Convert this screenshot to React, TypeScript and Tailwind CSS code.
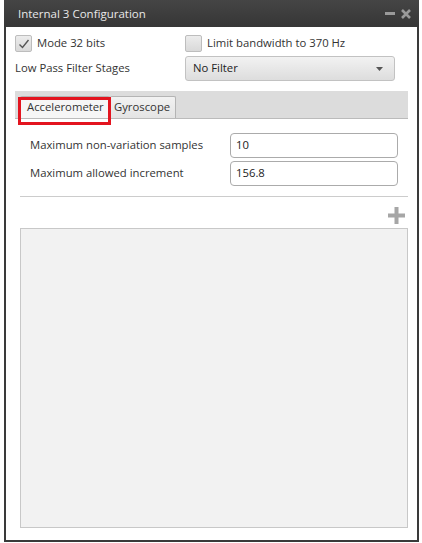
import React from 'react';

const font = { fontFamily: '"Open Sans", "Noto Sans", sans-serif' };

const Check: React.FC<{ checked?: boolean; label: string }> = ({ checked, label }) => (
  <label className="flex items-center gap-[5px] text-[11.3px] text-[#333]">
    <span className="w-[17px] h-[17px] rounded-[2px] border border-[#bdbdbd] bg-gradient-to-b from-[#ececec] to-[#d9d9d9] flex items-center justify-center">
      {checked && (
        <svg width="12" height="12" viewBox="0 0 12 12">
          <path d="M1.5 6.5 L4.5 9.5 L10.5 2" fill="none" stroke="#555" strokeWidth="1.4" />
        </svg>
      )}
    </span>
    {label}
  </label>
);

const Field: React.FC<{ label: string; value: string }> = ({ label, value }) => (
  <div className="flex items-center">
    <span className="w-[209px] pl-[9px] text-[11.3px] text-[#333]">{label}</span>
    <div className="w-[168px] h-[25px] rounded-[4px] border border-[#ababab] bg-white flex items-center px-[5px] text-[11.3px] text-[#222]">
      {value}
    </div>
  </div>
);

export default function App() {
  return (
    <div className="w-[422px] h-[543px] bg-white" style={font}>
      <div className="ml-[4px] w-[415px] h-[542px] flex flex-col border-x-2 border-b-2 border-[#3a3a3a]">
        {/* Title bar */}
        <div className="h-[27px] -mx-[2px] bg-gradient-to-b from-[#454545] to-[#363636] flex items-center justify-between pl-[14px] pr-[8px]">
          <span className="text-[11.5px] text-[#e8e8e8]">Internal 3 Configuration</span>
          <div className="flex items-center gap-[6px]">
            <span className="w-[10px] h-[3px] bg-[#9a9a9a]" />
            <svg width="10" height="10" viewBox="0 0 10 10">
              <path d="M1 1 L9 9 M9 1 L1 9" stroke="#9a9a9a" strokeWidth="2.6" />
            </svg>
          </div>
        </div>

        <div className="flex flex-col pl-[9px] pr-[9px]">
          {/* Options */}
          <div className="flex items-center mt-[8px] h-[17px]">
            <div className="w-[170px]">
              <Check checked label="Mode 32 bits" />
            </div>
            <Check label="Limit bandwidth to 370 Hz" />
          </div>
          <div className="flex items-center mt-[4px]">
            <span className="w-[170px] text-[11.3px] text-[#333]">Low Pass Filter Stages</span>
            <div className="w-[210px] h-[25px] rounded-[3px] border border-[#c2c2c2] bg-gradient-to-b from-[#f2f2f2] to-[#dddddd] flex items-center justify-between pl-[7px] pr-[11px] text-[11.3px] text-[#222]">
              No Filter
              <svg width="7" height="4" viewBox="0 0 7 4">
                <path d="M0 0 H7 L3.5 4 Z" fill="#555" />
              </svg>
            </div>
          </div>

          {/* Tabs */}
          <div className="relative mt-[10px] h-[28px] w-[393px] bg-[#dcdcdc] border-b border-[#bbbbbb] flex items-end pl-[5px]">
            <div className="h-[22px] w-[90px] bg-[#f6f6f6] border border-b-0 border-[#b4b4b4] rounded-t-[2px] flex items-center pl-[6px] text-[11.3px] text-[#333]">
              Accelerometer
            </div>
            <div className="h-[22px] w-[66px] bg-gradient-to-b from-[#f2f2f2] to-[#e4e4e4] border border-b-0 border-l-0 border-[#b4b4b4] rounded-t-[2px] flex items-center pl-[4px] text-[11.3px] text-[#333]">
              Gyroscope
            </div>
            <div className="absolute left-[3px] top-[6px] w-[93px] h-[28px] border-[3px] border-[#e3141f]" />
          </div>

          {/* Parameters */}
          <div className="flex flex-col gap-[3px] mt-[14px] pl-[6px]">
            <Field label="Maximum non-variation samples" value="10" />
            <Field label="Maximum allowed increment" value="156.8" />
          </div>

          <div className="mt-[10px] ml-[5px] w-[388px] h-px bg-[#cccccc]" />

          <div className="flex justify-end mt-[10px] pr-[3px]">
            <svg width="17" height="17" viewBox="0 0 17 17">
              <path d="M6.5 0 H10.5 V6.5 H17 V10.5 H10.5 V17 H6.5 V10.5 H0 V6.5 H6.5 Z" fill="#a6a6a6" />
            </svg>
          </div>

          <div className="mt-[4px] ml-[5px] w-[388px] h-[300px] bg-[#f2f2f2] border border-[#c8c8c8]" />
        </div>
      </div>
    </div>
  );
}
